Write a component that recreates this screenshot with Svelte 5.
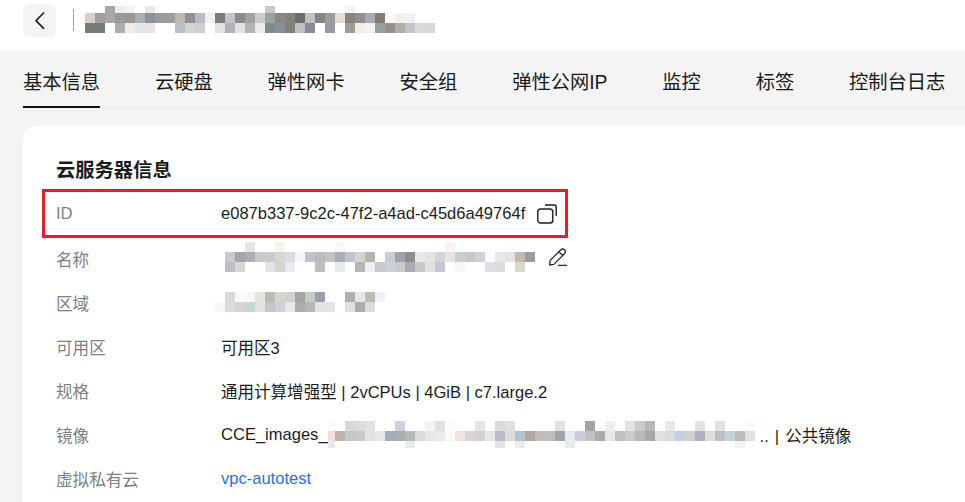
<script>
  const titleRows = [
    { h: 7, cells: '- - a9a6a7 ececee f5f5ef - e6e7ea - - - - - - - - - - - c4c9c8 - - - - - - - f2f2ef' },
    { h: 10, cells: 'd8d0c8 a39ea4 a9a8aa 969c9c 9b9893 abafb4 8d9198 9c989c 9c9ca6 bdb9b1 8f9294 b6bbc9 f4efeb 7f7b78 c1c4c9 8e8a85 9ca3a8 c9cbd0 9aa5a0 8a8683 83837e 6c6e6a c4c0be 85868a a09c9e e1ddd8 8c8479 8e8f95 a9aaaf 847c74 fbf9f6 f1f1f0 f0f1f1' },
    { h: 10, cells: '7b7975 757a7b fafcfe b1adaa ededed e2e5eb e9e4df - - b8c1c9 d2d5d2 cfcfcc - e3e2e0 b1b2b6 e4e3e3 b6b4b0 ebebeb 838a8c 8a909a 81817a bcc1c4 8b889c - 9698a6 - 999c99 f0eee6 f1f1f3 979f9f 97918c b2aeaa c7c3cb d8dadb d8d9d4' }
  ];
  const nameRows = [
    { h: 10, cells: '- - e5e6e0 - - f5f4ef - - - - - f7f7f7 - - - - - - - - - - f9f4ef - - - - - fafcfe' },
    { h: 10, cells: 'c8cacc a3a5aa adaeb4 c5cbce ccc8cb d5d8d0 d9dbe1 f3f7fb c1c3cd b8bcc0 c3c5c4 a9adb8 c0c4d0 d5d2ca b8b4b2 - c4cfd0 a0a2ae 8f8f92 e8e9eb e6e3e3 d0d6d5 e7e3e3 c9ced6 ccc4c9 d1d1d8 f9fdff e8e7e5 e4e2dc c4bab2 a09c99' },
    { h: 10, cells: 'bcbfca d9d6d4 - - e0e2e6 d3d5ca e8eaed - - c0bdba - e8e9eb - b8b4b4 eeeff1 c5cbcc ccd1d9 cacbcb aea8b8 c5cbc3 e3e0e0 c4c6d2 - f6f6f6 - - dedee4 dcdcda - d8d8c8' }
  ];
  const regionRows = [
    { h: 10, cells: '- d8d8d8 fbfaf8 f6f8fb e3e6de bbbcb0 d9d3d0 d2d1d1 a5a5a5 c4cdca a09eaa - - b0afa9 e6e7e9 bdbab6 eff0f3' },
    { h: 10, cells: 'f7f7f5 d6dede d8d4cf cad6d5 e0e2e4 c5c6d0 ced0d8 e8e8e8 a8afb4 b4b8b6 e2e3ea e4e3df - e3e0d8 a8adb1 dbdbdb' }
  ];
  const imageRows = [
    { h: 10, cells: 'fdfcfa - d3d8d8 dcdedd e0e3e2 - - cfd0df - - f5f2ee dbe0e4 fdfcf8 - - e5e5e5 fdfdfd dcdcdc dfdfdf - - - - e3e1e3 - - a0a5a8 - eeeeec - e3e3de ccccce b8b8b5 - e8e8e8 - - e3e3e3 - e0e0e0 - - f8fcff' },
    { h: 10, cells: 'eee0dc bcb5ac c3c9ca ccc8c2 e0e3e2 e4e9eb a3abbe b0acb4 b2bbbb d8dce0 e7e6e2 e9eaec f9f9f9 f0e4df d8d2d0 cdd1d8 e6e6e0 b8bdc8 dcdcde b3c2d2 b0a8a0 c1bcbc bdc0ba a0a6b0 e8eaee c8ced8 c5c1c0 aaaaaa e8e8ec c0c0be c9ccce b9b9c3 a9a9aa e3e1de d8dbe0 c5cedd cfcfcc b0b0be d8dfde c0bfc0 c5d3d8 bcbcb8 e0e1e4' },
    { h: 7, cells: 'e6e8ec - - - - - - - e8ecea - - - - - - - - e3e3e3 - f0ece6 - - - - e8eaeb - - - - - - - - - - - - - - - - f2f4f2' }
  ];
  const tabs = ['基本信息', '云硬盘', '弹性网卡', '安全组', '弹性公网IP', '监控', '标签', '控制台日志'];
  const cellsOf = (row) => row.cells.split(' ').map((c) => (c === '-' ? 'transparent' : '#' + c));
</script>

{#snippet mosaic(rows, kind)}
  <div class="mosaic {kind}">
    {#each rows as row}
      <div class="mrow" style:height="{row.h}px">
        {#each cellsOf(row) as color}
          <i class="cell" style:background={color}></i>
        {/each}
      </div>
    {/each}
  </div>
{/snippet}

<div class="page">
  <header class="top">
    <button class="back" aria-label="返回">
      <svg width="12" height="20" viewBox="0 0 12 20" fill="none">
        <path d="M9.6 2 L2 9.6 L9.6 17.4" stroke="#1f1f1f" stroke-width="1.7" stroke-linecap="round" stroke-linejoin="round" />
      </svg>
    </button>
    <span class="divider"></span>
    {@render mosaic(titleRows, 'm-title')}
  </header>

  <main class="body">
    <nav class="tabs">
      {#each tabs as tab, i}
        <span class="tab" class:active={i === 0}>{tab}</span>
      {/each}
    </nav>

    <section class="card">
      <h2>云服务器信息</h2>
      <div class="highlight"></div>

      <div class="row first">
        <span class="label">ID</span>
        <span class="value">e087b337-9c2c-47f2-a4ad-c45d6a49764f</span>
        <svg class="copy" width="20" height="20" viewBox="0 0 20 20" fill="none">
          <rect x="0.8" y="5" width="15" height="14" rx="2.8" stroke="#1c1c1c" stroke-width="1.4" />
          <path d="M8.5 1 H17.4 Q19.2 1 19.2 2.8 V11.5" stroke="#1c1c1c" stroke-width="1.4" stroke-linecap="round" />
        </svg>
      </div>

      <div class="row">
        <span class="label">名称</span>
        {@render mosaic(nameRows, 'm-name')}
        <svg class="pen" width="20" height="20" viewBox="0 0 20 20" fill="none">
          <path d="M2 13.6 L12.6 3 Q14.6 1 16.6 2.8 Q18.4 4.8 16.4 6.8 L5.8 17.4 L1.6 18 Z M11 4.8 L14.8 8.6" stroke="#2a2a2a" stroke-width="1.3" stroke-linejoin="round" />
          <path d="M10 18.4 H19" stroke="#2a2a2a" stroke-width="1.3" />
        </svg>
      </div>

      <div class="row">
        <span class="label">区域</span>
        {@render mosaic(regionRows, 'm-region')}
      </div>

      <div class="row">
        <span class="label">可用区</span>
        <span class="value">可用区3</span>
      </div>

      <div class="row">
        <span class="label">规格</span>
        <span class="value">通用计算增强型 | 2vCPUs | 4GiB | c7.large.2</span>
      </div>

      <div class="row">
        <span class="label">镜像</span>
        <span class="value">CCE_images_</span>
        {@render mosaic(imageRows, 'm-image')}
        <span class="value tail">.. | 公共镜像</span>
      </div>

      <div class="row">
        <span class="label">虚拟私有云</span>
        <span class="value link">vpc-autotest</span>
      </div>
    </section>
  </main>
</div>

<style>
  :global(body) {
    margin: 0;
    background: #fff;
  }
  .page {
    width: 965px;
    height: 502px;
    overflow: hidden;
    font-family: "Liberation Sans", "Noto Sans CJK SC", sans-serif;
    color: #191919;
  }
  .top {
    height: 50px;
    box-sizing: border-box;
    display: flex;
    align-items: flex-start;
    background: #fff;
    padding: 4px 0 0 23px;
  }
  .back {
    width: 33px;
    height: 33px;
    border: 0;
    padding: 0;
    border-radius: 6px;
    background: #f4f4f4;
    display: flex;
    align-items: center;
    justify-content: center;
  }
  .divider {
    width: 1px;
    height: 22px;
    margin: 5px 11px 0 17px;
    background: #9a9a9a;
  }
  .mosaic {
    display: flex;
    flex-direction: column;
    flex: none;
  }
  .mrow {
    display: flex;
  }
  .cell {
    display: block;
    width: 10px;
    flex: none;
  }
  .m-title {
    margin-top: 2px;
  }
  .m-name {
    margin: -4px 0 0 4px;
  }
  .m-region {
    margin: -2px 0 0 -6px;
  }
  .m-image {
    margin: -2px 0 0 0;
  }
  .m-image .cell:first-child {
    width: 7px;
  }
  .body {
    background: #f4f4f4;
    height: 452px;
  }
  .tabs {
    height: 58px;
    box-sizing: border-box;
    display: flex;
    gap: 54.8px;
    margin-left: 23px;
    border-bottom: 1px solid #ececec;
    white-space: nowrap;
  }
  .tab {
    flex: none;
    height: 58px;
    box-sizing: border-box;
    font-size: 19.3px;
    line-height: 66px;
  }
  .tab.active {
    border-bottom: 2px solid #111;
  }
  .card {
    position: relative;
    margin: 18px -20px 0 23px;
    height: 400px;
    background: #fff;
    border-radius: 14px 14px 0 0;
    padding: 30px 0 0 33px;
    box-sizing: border-box;
  }
  h2 {
    margin: 0;
    font-size: 19.3px;
    line-height: 30px;
    font-weight: 700;
    color: #1c1c1c;
  }
  .highlight {
    position: absolute;
    left: 19px;
    top: 63px;
    width: 520px;
    height: 43px;
    border: 3px solid #e81c2b;
  }
  .row {
    display: flex;
    align-items: center;
    height: 44px;
    font-size: 16.55px;
    white-space: nowrap;
  }
  .row.first {
    margin-top: 6px;
    margin-bottom: 1px;
  }
  .label {
    flex: none;
    width: 165px;
    color: #808080;
    font-size: 16.6px;
  }
  .value {
    color: #1c1c1c;
  }
  .link {
    color: #2f6df6;
  }
  .tail {
    margin-left: 5px;
    word-spacing: 1.5px;
  }
  .copy {
    margin-left: 12px;
    margin-top: 0;
  }
  .pen {
    margin-left: 13px;
    margin-top: -4px;
  }
</style>
